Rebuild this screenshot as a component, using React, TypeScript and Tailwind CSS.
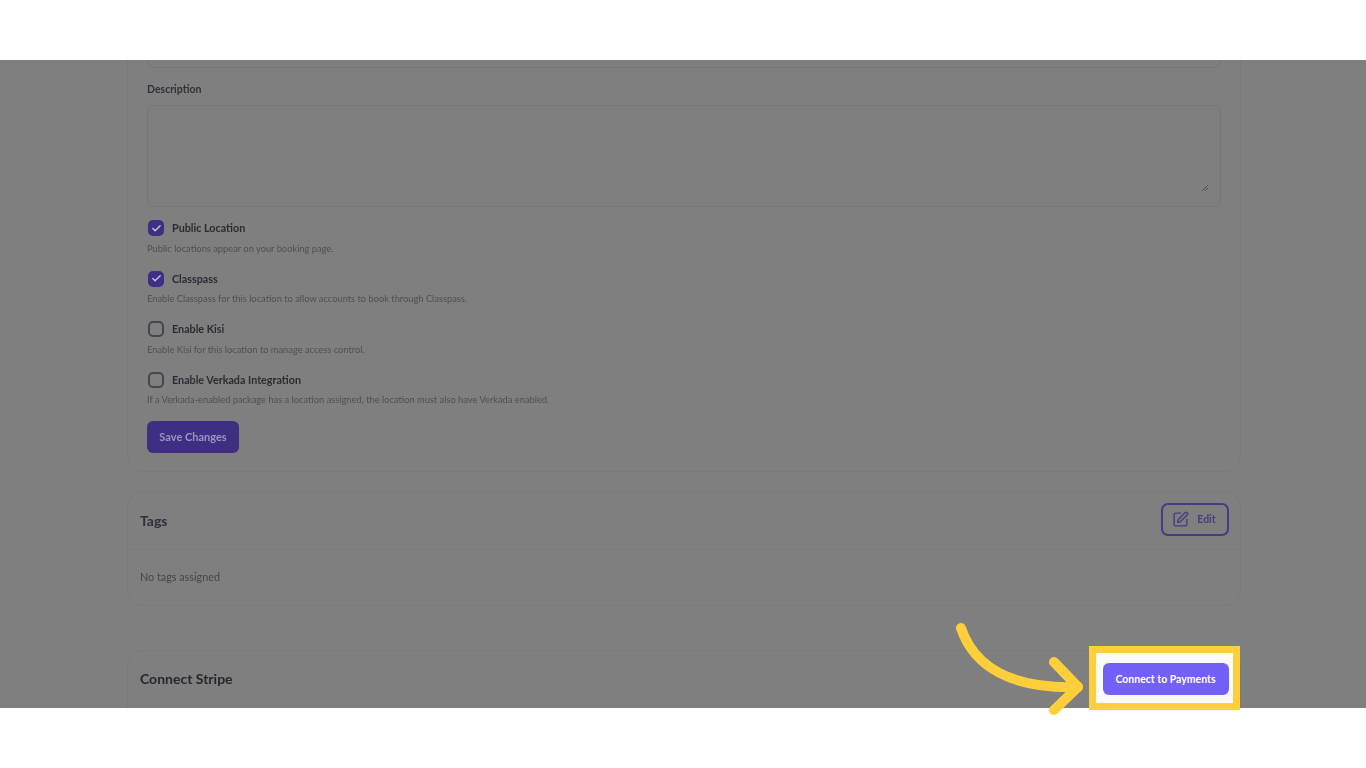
import { Check, SquarePen } from "lucide-react"

const options = [
  { label: "Public Location", help: "Public locations appear on your booking page.", checked: true },
  { label: "Classpass", help: "Enable Classpass for this location to allow accounts to book through Classpass.", checked: true },
  { label: "Enable Kisi", help: "Enable Kisi for this location to manage access control.", checked: false },
  { label: "Enable Verkada Integration", help: "If a Verkada-enabled package has a location assigned, the location must also have Verkada enabled.", checked: false },
]

function Option({ label, help, checked }: { label: string; help: string; checked: boolean }) {
  return (
    <div className="h-[50.6px]">
      <div className="flex h-[20px] items-center gap-[8px] pl-[1px]">
        {checked ? (
          <span className="flex h-[16px] w-[16px] items-center justify-center rounded-[5px] bg-[#3f2e82]">
            <Check size={11} strokeWidth={3} className="text-[#c9c4dd]" />
          </span>
        ) : (
          <span className="h-[16px] w-[16px] rounded-[5px] border-2 border-[#45464f]" />
        )}
        <span className="text-[10.75px] font-bold text-[#2b2b35]">{label}</span>
      </div>
      <p className="mt-[3.5px] text-[9.3px] leading-[14px] text-[#4e4f57]">{help}</p>
    </div>
  )
}

export default function App() {
  return (
    <div className="relative h-[768px] w-[1366px] overflow-hidden bg-white font-['Lato',sans-serif]">
      <div className="h-[60px] bg-white" />

      <div className="h-[648px] overflow-hidden bg-[#7f7f7f] pl-[127px] pr-[125px] blur-[0.4px]">
        {/* Location form */}
        <div className="-mt-[41px] h-[453px] rounded-[16px] border border-[#7a7a7a] px-[19px] pt-[10px]">
          <div className="h-[38px] rounded-[8px] border border-[#777777]" />
          <div className="mt-[14px] h-[14px] text-[10.5px] font-bold leading-[14px] text-[#2f303a]">Description</div>
          <div className="relative mt-[9px] h-[102px] rounded-[8px] border border-[#777777]">
            <svg className="absolute bottom-[14px] right-[11px]" width="8" height="8" viewBox="0 0 8 8" fill="none" stroke="#505050" strokeWidth="1">
              <path d="M1 7 7 1M4 7 7 4" />
            </svg>
          </div>
          <div className="mt-[11px]">
            {options.map((o) => (
              <Option key={o.label} {...o} />
            ))}
          </div>
          <button className="mt-[1px] block h-[32px] w-[92px] rounded-[6px] bg-[#3f2e82] text-[11px] font-bold text-[#9c96c0]">
            Save Changes
          </button>
        </div>

        {/* Tags */}
        <div className="mt-[19px] h-[115px] rounded-[16px] border border-[#7a7a7a]">
          <div className="flex h-[58px] items-center justify-between border-b border-[#7a7a7a] pl-[12px] pr-[11px]">
            <span className="text-[14px] font-bold text-[#2f303a]">Tags</span>
            <button className="mb-[2px] flex h-[33px] w-[68px] items-center justify-center gap-[8px] rounded-[7px] border-2 border-[#463c82] pr-[2px] text-[10.5px] font-bold text-[#463c82]">
              <SquarePen size={17} strokeWidth={2} />
              Edit
            </button>
          </div>
          <p className="pl-[12px] pt-[20px] text-[10.8px] leading-[14px] text-[#45464e]">No tags assigned</p>
        </div>

        {/* Connect Stripe */}
        <div className="mt-[44px] flex h-[80px] items-start rounded-[16px] border border-[#7a7a7a] pl-[12px] pt-[18px]">
          <span className="text-[14px] font-bold leading-[20px] text-[#26262e]">Connect Stripe</span>
        </div>
      </div>

      <div className="h-[60px] bg-white" />

      {/* Highlight over the target button */}
      <div className="absolute left-[1089px] top-[646px] flex h-[64px] w-[151px] items-center justify-center border-[7px] border-[#ffcf3b] bg-[#fbfbfd]">
        <button className="ml-[2px] mt-[2px] h-[32px] w-[126px] rounded-[6px] bg-[#7360f6] pt-[2px] text-[10.5px] font-bold text-white">
          Connect to Payments
        </button>
      </div>
      <svg className="absolute left-[950px] top-[615px]" width="140" height="105" viewBox="0 0 140 105" fill="none" stroke="#ffcf3b" strokeWidth="10" strokeLinecap="round" strokeLinejoin="round">
        <path d="M11 13C24 52 62 74 128 72" />
        <path d="M104 47 128 72 104 95" />
      </svg>
    </div>
  )
}
